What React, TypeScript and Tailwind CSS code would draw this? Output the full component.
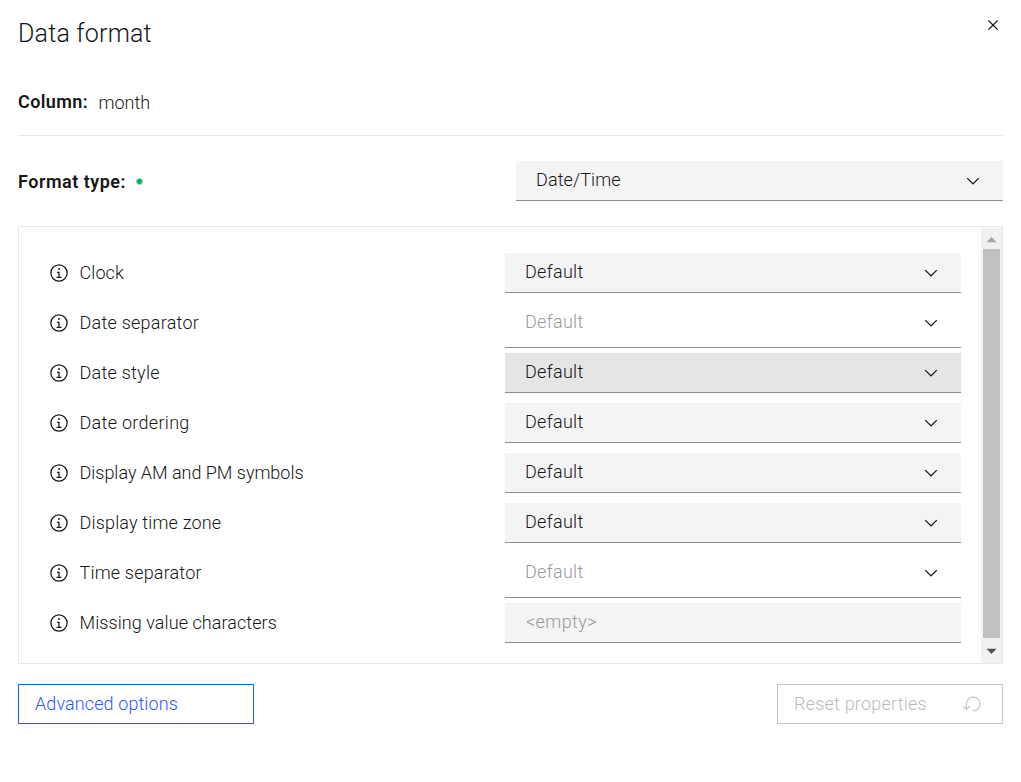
import React from "react";

type Variant = "field" | "active" | "plain" | "input";

interface Property {
  label: string;
  tracking: string;
  value: string;
  variant: Variant;
}

const properties: Property[] = [
  { label: "Clock", tracking: "tracking-[0.1px]", value: "Default", variant: "field" },
  { label: "Date separator", tracking: "tracking-[0.25px]", value: "Default", variant: "plain" },
  { label: "Date style", tracking: "tracking-[0.25px]", value: "Default", variant: "active" },
  { label: "Date ordering", tracking: "tracking-[0.3px]", value: "Default", variant: "field" },
  { label: "Display AM and PM symbols", tracking: "tracking-[-0.02px]", value: "Default", variant: "field" },
  { label: "Display time zone", tracking: "tracking-[0.17px]", value: "Default", variant: "field" },
  { label: "Time separator", tracking: "tracking-[0.18px]", value: "Default", variant: "plain" },
  { label: "Missing value characters", tracking: "tracking-[0.07px]", value: "<empty>", variant: "input" },
];

const variantClass: Record<Variant, string> = {
  field: "h-10 bg-[#f4f4f4] text-[#161616]",
  active: "h-10 bg-[#e5e5e5] text-[#161616]",
  plain: "h-[45px] bg-white text-[#999999] pb-[5px]",
  input: "h-10 bg-[#f4f4f4] text-[#999999]",
};

function InfoIcon() {
  return (
    <svg viewBox="0 0 32 32" className="size-5 shrink-0" fill="#161616">
      <path d="M17 22V14H13v2h2v6H12v2h8V22zM16 8a1.5 1.5 0 1 0 1.5 1.5A1.5 1.5 0 0 0 16 8z" />
      <path d="M16 30A14 14 0 1 1 30 16 14 14 0 0 1 16 30ZM16 4A12 12 0 1 0 28 16 12 12 0 0 0 16 4Z" />
    </svg>
  );
}

function ChevronIcon() {
  return (
    <svg viewBox="0 0 16 16" className="size-5 shrink-0" fill="#161616">
      <path d="M8 11 3 6l.7-.7L8 9.6l4.3-4.3L13 6z" />
    </svg>
  );
}

function CloseIcon() {
  return (
    <svg viewBox="0 0 32 32" className="size-5" fill="#161616">
      <path d="M24 9.4 22.6 8 16 14.6 9.4 8 8 9.4 14.6 16 8 22.6 9.4 24 16 17.4 22.6 24 24 22.6 17.4 16z" />
    </svg>
  );
}

function ResetIcon() {
  return (
    <svg viewBox="0 0 32 32" className="size-5 shrink-0" fill="#c6c6c6">
      <path d="M18 28A12 12 0 1 0 6 16v6.2L2.4 18.6 1 20l6 6 6-6-1.4-1.4L8 22.2V16A10 10 0 1 1 18 26Z" />
    </svg>
  );
}

function Field({ property }: { property: Property }) {
  const { value, variant } = property;
  return (
    <div
      className={`flex w-[456px] shrink-0 items-center justify-between border-b border-[#8d8d8d] pl-5 pr-5 ${variantClass[variant]}`}
    >
      <span className={variant === "input" ? "pb-px pl-px tracking-[0.4px]" : "pb-px tracking-[0.3px]"}>{value}</span>
      {variant !== "input" && <ChevronIcon />}
    </div>
  );
}

export default function App() {
  return (
    <main className="flex h-[782px] w-[1021px] flex-col bg-white pl-[18px] pr-[18px] font-['Roboto','Liberation_Sans',sans-serif] text-[18px] leading-6 font-[350] text-[#161616]">
      <header className="flex h-[84px] items-start justify-between">
        <h1 className="pt-[18px] text-[25px] leading-8 tracking-[0.2px]">Data format</h1>
        <button className="mt-[15px]" aria-label="Close">
          <CloseIcon />
        </button>
      </header>

      <section className="flex h-[52px] items-start border-b border-[#e8e8e8] pt-[6px]">
        <span className="w-[80.5px] font-semibold tracking-[0.4px]">Column:</span>
        <span className="pt-px tracking-[0px]">month</span>
      </section>

      <section className="flex h-[90px] w-[985px] items-start justify-between pt-[25px]">
        <div className="flex h-10 items-center">
          <span className="w-[118px] pt-[2px] font-semibold tracking-[0.5px]">Format type:</span>
          <span className="size-[7px] rounded-full border border-[#8ad8b0] bg-[#0caf60]" />
        </div>
        <div className="flex h-10 w-[487px] items-center justify-between border-b border-[#8d8d8d] bg-[#f4f4f4] pl-5 pr-5">
          <span className="pb-px tracking-[0.1px]">Date/Time</span>
          <ChevronIcon />
        </div>
      </section>

      <section className="flex h-[438px] w-[985px] shrink-0 justify-between border border-[#e8e8e8]">
        <div className="flex w-[942px] flex-col pt-[26px]">
          {properties.map((property) => (
            <div key={property.label} className="flex h-[50px] shrink-0 items-start justify-between">
              <div className="flex h-10 items-center pl-[30px]">
                <InfoIcon />
                <span className={`pl-[10.5px] ${property.tracking}`}>{property.label}</span>
              </div>
              <Field property={property} />
            </div>
          ))}
        </div>
        <div className="mt-px flex w-[21px] flex-col items-center bg-[#f1f1f1]">
          <svg viewBox="0 0 21 21" className="h-[21px] w-[21px] shrink-0" fill="#a3a3a3">
            <path d="M5.5 14.2 10.5 9l5 5.2z" />
          </svg>
          <div className="h-[389px] w-[17px] bg-[#c1c1c1]" />
          <svg viewBox="0 0 21 25" className="h-[25px] w-[21px] shrink-0" fill="#505050">
            <path d="M5.5 10.8h10l-5 5.2z" />
          </svg>
        </div>
      </section>

      <footer className="mt-5 flex w-[985px] justify-between">
        <button className="flex h-10 w-[236px] items-center border border-[#0f62fe] pl-4 tracking-[0.1px] text-[#2a58fa]">
          Advanced options
        </button>
        <button className="flex h-10 w-[226px] items-center justify-between border border-[#c6c6c6] pl-4 pr-5 text-[#bbbbbb]">
          <span className="tracking-[0.22px]">Reset properties</span>
          <ResetIcon />
        </button>
      </footer>
    </main>
  );
}
